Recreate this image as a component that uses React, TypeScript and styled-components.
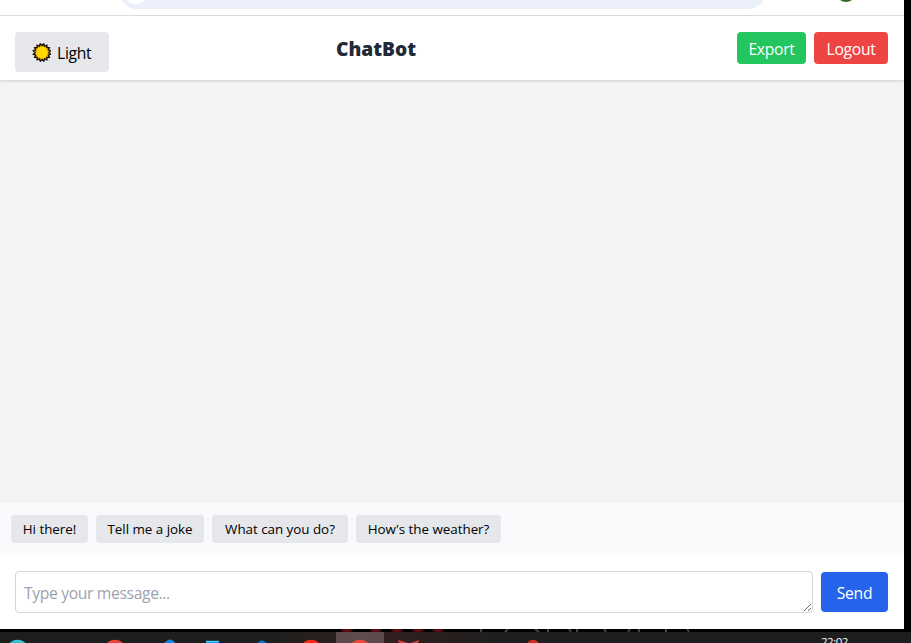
import React from "react";
import styled, { createGlobalStyle } from "styled-components";

const GlobalStyle = createGlobalStyle`
  * { box-sizing: border-box; }
  body { margin: 0; overflow: hidden; background: #000; font-family: "Open Sans", "Noto Sans", sans-serif; }
  button, textarea { font-family: inherit; }
`;

const Desktop = styled.div`
  width: 911px;
  height: 643px;
  overflow: hidden;
  display: flex;
  flex-direction: column;
  background: #000;
`;

const Window = styled.div`
  width: 904px;
  height: 629px;
  display: flex;
  flex-direction: column;
  background: #fff;
  overflow: hidden;
`;

const BrowserBar = styled.div`
  height: 16px;
  flex: none;
  border-bottom: 1px solid #dfe1e4;
  svg { display: block; }
`;

const Header = styled.header`
  height: 64px;
  flex: none;
  display: grid;
  grid-template-columns: 321px 1fr auto;
  align-items: start;
  padding: 16px 16px 0 15px;
  background: #fff;
  box-shadow: 0 1px 3px rgba(0, 0, 0, 0.1), 0 1px 2px rgba(0, 0, 0, 0.06);
  z-index: 1;
`;

const Title = styled.h1`
  margin: 0;
  font-size: 19.2px;
  line-height: 34px;
  font-weight: 800;
  color: #1f2937;
`;

const Actions = styled.div`
  display: flex;
  gap: 8px;
`;

const Button = styled.button<{ $w: number; $h: number; $bg: string }>`
  display: flex;
  align-items: center;
  justify-content: center;
  width: ${(p) => p.$w}px;
  height: ${(p) => p.$h}px;
  padding: 2px 0 0;
  border: 0;
  border-radius: 4px;
  background: ${(p) => p.$bg};
  color: #fff;
  font-size: 15.7px;
  line-height: 24px;
  letter-spacing: -0.3px;
  white-space: nowrap;
`;

const ThemeButton = styled(Button)`
  justify-content: flex-start;
  padding-left: 17px;
  gap: 6px;
  color: #000;
  svg { flex: none; margin-top: -2px; }
`;

const Messages = styled.main`
  flex: 1;
  background: #f3f4f6;
`;

const Suggestions = styled.div`
  height: 52px;
  flex: none;
  display: flex;
  gap: 8px;
  padding: 12px 11px;
  background: #f9fafb;
`;

const Suggestion = styled(Button)`
  padding: 0;
  color: #000;
  font-size: 13.4px;
  line-height: 20px;
  letter-spacing: -0.03px;
`;

const Composer = styled.form`
  height: 74px;
  flex: none;
  display: flex;
  align-items: center;
  gap: 8px;
  padding: 0 16px 0 15px;
`;

const MessageInput = styled.textarea`
  flex: 1;
  height: 42px;
  padding: 9px 8px 7px;
  border: 1px solid #d1d5db;
  border-radius: 4px;
  background: #fff;
  font-size: 15.7px;
  line-height: 24px;
  letter-spacing: -0.36px;
  outline: none;
  overflow: hidden;
  &::placeholder { color: #9ca3af; opacity: 1; }
`;

const Taskbar = styled.footer`
  height: 14px;
  flex: none;
  display: flex;
  overflow: hidden;
  background: linear-gradient(#000 3px, #1e1e1e 3px);
  svg { display: block; flex: none; }
`;

const Clock = styled.time`
  padding-top: 6px;
  font-size: 11.5px;
  line-height: 14px;
  letter-spacing: -0.5px;
  color: #fff;
`;

const sunPoints = Array.from({ length: 32 }, (_, i) => {
  const radius = i % 2 === 0 ? 8.8 : 6.9;
  const angle = (i * Math.PI) / 16 + Math.PI / 16;
  return `${10 + radius * Math.cos(angle)},${9.5 + radius * Math.sin(angle)}`;
}).join(" ");

const SunIcon = () => (
  <svg width="19" height="19" viewBox="0 0 19 19">
    <polygon points={sunPoints} fill="#f5a800" stroke="#17140b" strokeWidth="1.4" />
    <circle cx="10" cy="9.5" r="5.7" fill="#ffd900" />
  </svg>
);

const AddressBar = () => (
  <svg width="904" height="15" viewBox="0 0 904 15">
    <rect x="119" y="-27" width="647" height="36" rx="18" fill="#ebf0fa" />
    <circle cx="136" cy="-8" r="12" fill="#fff" />
    <circle cx="846" cy="-8" r="10" fill="#33691e" />
  </svg>
);

const TaskbarIcons = () => (
  <svg width="821" height="14" viewBox="0 0 821 14">
    <defs>
      <linearGradient id="glow">
        <stop offset="0" stopColor="#33201f" stopOpacity="0" />
        <stop offset=".45" stopColor="#33201f" />
        <stop offset="1" stopColor="#33201f" stopOpacity="0" />
      </linearGradient>
      <linearGradient id="edge">
        <stop offset="0" stopColor="#28b5dc" />
        <stop offset=".7" stopColor="#36c6d3" />
        <stop offset="1" stopColor="#55ce65" />
      </linearGradient>
    </defs>
    <rect x="270" y="3" width="230" height="11" fill="url(#glow)" />
    <rect x="336" y="3" width="48" height="11" fill="#5c4c4e" />
    <g fill="#74101b" opacity=".85">
      <ellipse cx="347" cy="1.5" rx="6" ry="1.4" />
      <ellipse cx="376" cy="1.5" rx="6" ry="1.4" />
      <ellipse cx="397" cy="1.5" rx="6" ry="1.4" />
      <ellipse cx="418" cy="1.5" rx="6" ry="1.4" />
      <ellipse cx="438" cy="1.5" rx="6" ry="1.4" />
    </g>
    <path d="M481 0v3M508 0l-3 3M535 0l4 3M548 0v3M569 0l2 3M577 0v3M604 0l2 3M630 0l-2 3M639 0v3M666 0v3M687 0l2 3" stroke="#444" strokeWidth="2" />
    <circle cx="17.5" cy="22" r="11.2" fill="url(#edge)" />
    <circle cx="115" cy="22" r="11.2" fill="#ea4335" />
    <path d="M164 14l4-3 3-0.5 4 2.5v1z" fill="#1685d2" />
    <rect x="206" y="12" width="13" height="2" fill="#08a8f4" />
    <path d="M206 12.3h13" stroke="#5ad8ff" />
    <path d="M257 14l4-2.6h2l4 2.6z" fill="#0b70c6" />
    <circle cx="311" cy="22" r="11.2" fill="#ff2719" />
    <circle cx="360" cy="22" r="11.2" fill="#ee4a3b" />
    <path d="M398 11l10 3h-9zM419 11l-8 3h7z" fill="#e63c3b" />
    <circle cx="533" cy="17.5" r="6.7" fill="#d52c1e" />
  </svg>
);

const suggestions = [
  { text: "Hi there!", width: 77 },
  { text: "Tell me a joke", width: 108 },
  { text: "What can you do?", width: 136 },
  { text: "How's the weather?", width: 145 },
];

export default function App() {
  return (
    <>
      <GlobalStyle />
      <Desktop>
        <Window>
          <BrowserBar>
            <AddressBar />
          </BrowserBar>
          <Header>
            <ThemeButton $w={94} $h={40} $bg="#e5e7eb">
              <SunIcon />
              <span>Light</span>
            </ThemeButton>
            <Title>ChatBot</Title>
            <Actions>
              <Button $w={69} $h={32} $bg="#22c55e">Export</Button>
              <Button $w={74} $h={32} $bg="#ef4444">Logout</Button>
            </Actions>
          </Header>
          <Messages />
          <Suggestions>
            {suggestions.map((s) => (
              <Suggestion key={s.text} $w={s.width} $h={28} $bg="#e5e7eb">
                {s.text}
              </Suggestion>
            ))}
          </Suggestions>
          <Composer>
            <MessageInput placeholder="Type your message..." rows={1} />
            <Button type="button" $w={67} $h={40} $bg="#2563eb">Send</Button>
          </Composer>
        </Window>
        <Taskbar>
          <TaskbarIcons />
          <Clock>22:02</Clock>
        </Taskbar>
      </Desktop>
    </>
  );
}
